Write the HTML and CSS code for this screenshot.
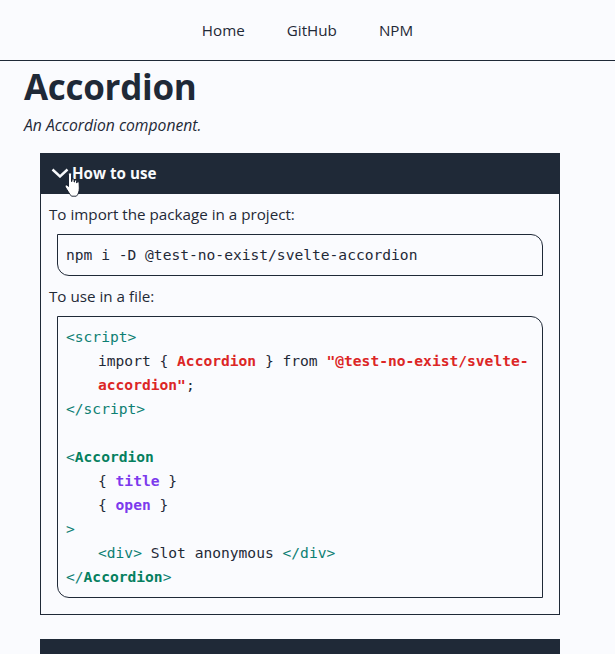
FILE: index.html
```html
<!DOCTYPE html>
<html lang="en">
<head>
<meta charset="utf-8">
<title>Accordion</title>
<link rel="stylesheet" href="styles.css">
</head>
<body>
<nav class="nav">
  <a href="#">Home</a>
  <a href="#">GitHub</a>
  <a href="#">NPM</a>
</nav>
<main class="main">
  <h1>Accordion</h1>
  <p class="lead">An Accordion component.</p>
  <section class="acc">
    <button class="acc-head">
      <svg class="chev" width="18" height="10" viewBox="0 0 18 10"><path d="M1.500 1.500 9 8.500l7.500-7" fill="none" stroke="#f8fafc" stroke-width="2.400"/></svg>
      <span>How to use</span>
    </button>
    <svg class="hand" width="18" height="25" viewBox="0 0 18 25"><path d="M6 .8c1 0 1.500.7 1.500 1.700v7l.5-.1V7.300c1.300-.7 2-.3 2.100.7v2l.4.1V8.400c1.200-.6 2-.2 2.100.7v1.700l.4.1V9.900c1.200-.5 2 0 2.100 1l.2 5.200c0 3.500-1.200 6.700-3 8.100H7.500C5.500 22 3.500 18.500 1.300 15c-.8-1.500.5-2.600 1.800-1.800l1.400 1.300V2.500C4.500 1.500 5 .8 6 .8Z" fill="#fff" stroke="#111827" stroke-width=".9"/></svg>
    <div class="acc-body">
      <p>To import the package in a project:</p>
      <pre class="code"><code>npm i -D @test-no-exist/svelte-accordion</code></pre>
      <p>To use in a file:</p>
      <pre class="code"><code><span class="line"><span class="tag">&lt;script&gt;</span></span><span class="line ind">import { <b class="red">Accordion</b> } from <b class="red">"@test-no-exist/svelte-</b><b class="red">accordion"</b>;</span><span class="line"><span class="tag">&lt;/script&gt;</span></span><span class="line">&nbsp;</span><span class="line"><span class="tag">&lt;<b class="comp">Accordion</b></span></span><span class="line ind">{ <b class="prop">title</b> }</span><span class="line ind">{ <b class="prop">open</b> }</span><span class="line"><span class="tag">&gt;</span></span><span class="line ind"><span class="tag">&lt;div&gt;</span> Slot anonymous <span class="tag">&lt;/div&gt;</span></span><span class="line"><span class="tag">&lt;/<b class="comp">Accordion</b>&gt;</span></span></code></pre>
    </div>
  </section>
  <section class="acc">
    <div class="acc-head"></div>
  </section>
</main>
</body>
</html>
```

FILE: styles.css
```css
* { box-sizing: border-box; }
html, body { height: 100%; overflow: hidden; }
body {
  margin: 0;
  background: #fafbfe;
  color: #1f2937;
  font-family: "Open Sans", "Noto Sans", sans-serif;
  font-size: 15.2px;
  line-height: 24px;
}
.nav {
  height: 61px;
  display: flex;
  justify-content: center;
  align-items: center;
  gap: 42px;
  border-bottom: 1px solid #1f2937;
}
.nav a { color: #1f2937; text-decoration: none; }
.main { padding: 0 24px; }
h1 {
  margin: 3px 0 0;
  font-size: 35px;
  line-height: 45px;
  font-weight: 700;
  letter-spacing: -0.3px;
}
.lead { margin: 4px 0 0; height: 24px; font-size: 15.7px; font-style: italic; }
.acc { position: relative; margin: 16px 31px 24px 16px; }
.acc-head {
  display: flex;
  align-items: center;
  gap: 3px;
  width: 100%;
  height: 41px;
  padding: 0 0 2px 11px;
  border: 0;
  background: #1f2937;
  color: #f8fafc;
  font: 700 15.2px/24px "Open Sans", "Noto Sans", sans-serif;
  text-align: left;
}
.hand { position: absolute; left: 24px; top: 19px; }
.acc-body {
  display: flow-root;
  padding: 0 8px 8px;
  border: 1px solid #1f2937;
  border-top: 0;
}
.acc-body p { margin: 8px 0; }
.code {
  margin: 8px;
  padding: 8px;
  border: 1px solid #1f2937;
  border-radius: 0 12px 0 12px;
  font-family: "DejaVu Sans Mono", monospace;
  font-size: 14.6px;
  line-height: 24px;
  white-space: pre-wrap;
}
.line { display: block; }
.ind { padding-left: 32px; }
.tag { color: #0d7f73; }
.comp { color: #05805f; }
.red { color: #dc2626; }
.prop { color: #7c3aed; }
```
